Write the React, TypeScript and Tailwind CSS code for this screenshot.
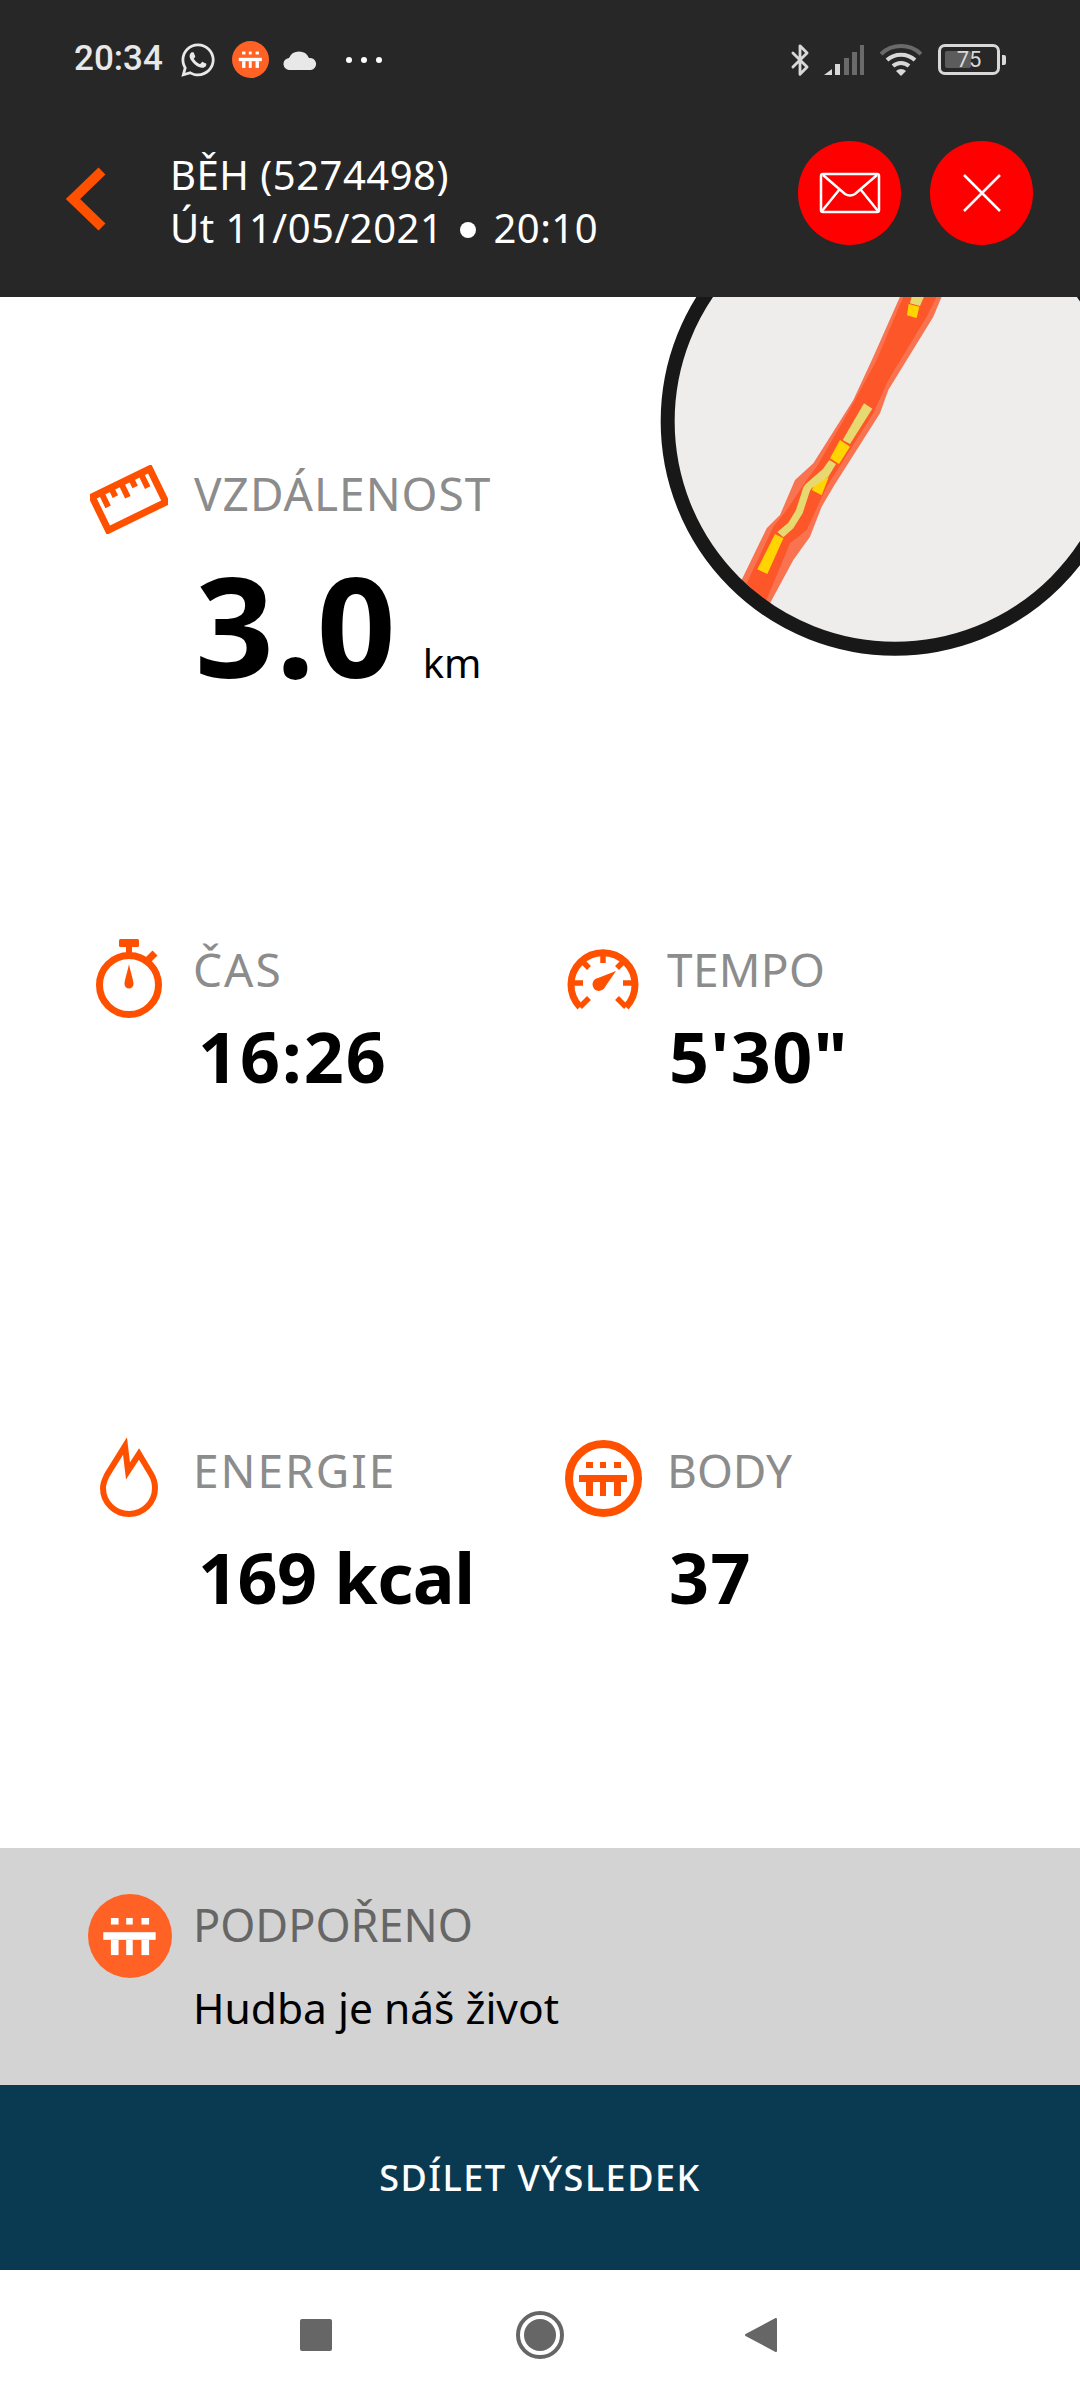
import { Bluetooth } from "lucide-react";
import { FaWhatsapp } from "react-icons/fa";
import type { ReactNode } from "react";

const ORANGE = "#ff5000";

function PointsMark({ color }: { color: string }) {
  return (
    <g fill={color}>
      <rect x="21" y="22" width="7" height="6" />
      <rect x="35" y="22" width="6" height="6" />
      <rect x="49" y="22" width="7" height="6" />
      <rect x="14" y="35" width="48" height="7" />
      <rect x="21" y="42" width="7" height="14" />
      <rect x="35" y="42" width="6" height="14" />
      <rect x="49" y="42" width="7" height="14" />
    </g>
  );
}

function PointsIcon() {
  return (
    <svg viewBox="0 0 77 77" className="h-[77px] w-[77px]">
      <circle cx="38.5" cy="38.5" r="34.5" fill="none" stroke={ORANGE} strokeWidth="8" />
      <PointsMark color={ORANGE} />
    </svg>
  );
}

function LogoBadge({ size, fill }: { size: string; fill: string }) {
  return (
    <svg viewBox="0 0 77 77" className={size}>
      <circle cx="38.5" cy="38.5" r="38.5" fill={fill} />
      <PointsMark color="#fff" />
    </svg>
  );
}

function RulerIcon() {
  return (
    <svg viewBox="0 0 78 69" className="h-[69px] w-[78px]">
      <g transform="rotate(-26 39 34.5)">
        <rect x="7" y="16" width="64" height="37" fill="none" stroke={ORANGE} strokeWidth="7" />
        <path d="M17 16v16M28 16v10M39 16v16M50 16v10M61 16v16" stroke={ORANGE} strokeWidth="6" fill="none" />
      </g>
    </svg>
  );
}

function StopwatchIcon() {
  return (
    <svg viewBox="0 0 66 79" className="h-[79px] w-[66px]">
      <circle cx="33" cy="46" r="29.5" fill="none" stroke={ORANGE} strokeWidth="7" />
      <rect x="23" y="0" width="20" height="8" rx="1.5" fill={ORANGE} />
      <rect x="30" y="7" width="6" height="8" fill={ORANGE} />
      <path d="M52 21l7-7" stroke={ORANGE} strokeWidth="7" fill="none" />
      <path d="M33 25c1.5 8 4.5 16 4.5 20a4.5 4.5 0 0 1-9 0c0-4 3-12 4.5-20z" fill={ORANGE} />
    </svg>
  );
}

function GaugeIcon() {
  return (
    <svg viewBox="0 0 72 63" className="h-[63px] w-[72px]">
      <path d="M13 60A32 32 0 1 1 59 60" fill="none" stroke={ORANGE} strokeWidth="7" />
      <g stroke={ORANGE} strokeWidth="5.5" fill="none">
        <path d="M36 4v12M14 13l8 8M58 13l-8 8M4 36h12M68 36h-12M13 60l9-9M59 60l-9-9" />
      </g>
      <path d="M49 24L31 31a6.5 6.5 0 1 0 7 9z" fill={ORANGE} />
    </svg>
  );
}

function FlameIcon() {
  return (
    <svg viewBox="0 0 58 81" className="h-[81px] w-[58px]">
      <path
        d="M25 8l3 25 11-17 12 20c3 5 4 9 4 14a26 26 0 0 1-52 0c0-5 2-9 4-13z"
        fill="none"
        stroke={ORANGE}
        strokeWidth="6"
      />
    </svg>
  );
}

function Stat({
  icon,
  label,
  value,
  labelClass,
  valueClass,
}: {
  icon: ReactNode;
  label: string;
  value: string;
  labelClass: string;
  valueClass: string;
}) {
  return (
    <div className="flex">
      <div className="flex h-[80px] w-[82px] shrink-0 items-center justify-center">{icon}</div>
      <div className="ml-[23px]">
        <div className={`${labelClass} h-[52px] text-[46px] leading-[52px] text-[#8c8c8c]`}>{label}</div>
        <div className={`${valueClass} text-[70px] leading-[76px] font-bold text-black`}>{value}</div>
      </div>
    </div>
  );
}

function StatusBar() {
  return (
    <div className="flex h-[117px] items-center pt-[2px] pr-[74px] pl-[74px]">
      <span className="font-['Roboto'] text-[35px] font-medium text-[#e8e8e8]">20:34</span>
      <FaWhatsapp className="ml-[16px] text-[38px] text-[#e8e8e8]" />
      <LogoBadge size="ml-[15px] h-[37px] w-[37px]" fill="#ff6224" />
      <svg viewBox="0 0 34 20" className="ml-[14px] h-[20px] w-[34px]">
        <path d="M7 20a6 6 0 0 1-1-12 11 11 0 0 1 20 0 6 6 0 0 1 2 12z" fill="#e8e8e8" />
      </svg>
      <div className="ml-[29px] flex gap-[9px]">
        <span className="h-[6px] w-[6px] rounded-full bg-white" />
        <span className="h-[6px] w-[6px] rounded-full bg-white" />
        <span className="h-[6px] w-[6px] rounded-full bg-white" />
      </div>
      <div className="ml-auto flex items-center">
        <Bluetooth size={34} strokeWidth={2} className="text-[#d8d8d8]" />
        <svg viewBox="0 0 40 30" className="ml-[7px] h-[30px] w-[40px]">
          <path d="M0 30l8-6v6z" fill="#d8d8d8" />
          <rect x="11" y="19" width="5" height="11" fill="#d8d8d8" />
          <rect x="20" y="13" width="5" height="17" fill="#6a6a6a" />
          <rect x="28" y="7" width="5" height="23" fill="#6a6a6a" />
          <rect x="36" y="0" width="4" height="30" fill="#6a6a6a" />
        </svg>
        <svg viewBox="0 0 42 32" className="ml-[16px] h-[32px] w-[42px]">
          <path d="M1 10a29 29 0 0 1 40 0" fill="none" stroke="#6a6a6a" strokeWidth="4" />
          <path d="M7 16a21 21 0 0 1 28 0" fill="none" stroke="#d8d8d8" strokeWidth="4" />
          <path d="M13 22a12 12 0 0 1 16 0" fill="none" stroke="#d8d8d8" strokeWidth="4" />
          <path d="M21 32l-5-5a7 7 0 0 1 10 0z" fill="#d8d8d8" />
        </svg>
        <div className="relative ml-[16px] h-[31px] w-[62px] rounded-[7px] border-[3px] border-[#d8d8d8]">
          <div className="absolute top-[4px] bottom-[4px] left-[4px] w-[26px] rounded-[2px] bg-[#5c5c5c]" />
          <span className="absolute inset-0 flex items-center justify-center font-['Roboto'] text-[22px] text-[#d8d8d8]">
            75
          </span>
        </div>
        <div className="ml-[2px] h-[10px] w-[4px] rounded-r-[2px] bg-[#d8d8d8]" />
      </div>
    </div>
  );
}

function TitleBar() {
  return (
    <div className="flex h-[180px] items-start">
      <svg viewBox="0 0 42 64" className="mt-[50px] ml-[65px] h-[64px] w-[42px]">
        <path d="M37 4L8 32l29 28" fill="none" stroke={ORANGE} strokeWidth="10" />
      </svg>
      <div className="mt-[31px] ml-[63px] text-[40px] leading-[53px] tracking-[0.5px] text-white">
        <div>BĚH (5274498)</div>
        <div className="flex items-center">
          <span>Út 11/05/2021</span>
          <span className="mx-[17px] mt-[4px] h-[16px] w-[16px] rounded-full bg-white" />
          <span>20:10</span>
        </div>
      </div>
      <div className="mt-[24px] mr-[47px] ml-auto flex gap-[29px]">
        <button className="flex h-[104px] w-[103px] items-center justify-center rounded-full bg-[#ff0000]">
          <svg viewBox="0 0 62 42" className="h-[42px] w-[62px]">
            <g fill="none" stroke="#fff" strokeWidth="2.5">
              <rect x="2" y="2" width="58" height="38" rx="2" />
              <path d="M4 3l22 19q5 3 10 0L58 3M3 39l17-21M59 39L42 18" />
            </g>
          </svg>
        </button>
        <button className="flex h-[104px] w-[103px] items-center justify-center rounded-full bg-[#ff0000]">
          <svg viewBox="0 0 38 38" className="h-[38px] w-[38px]">
            <path d="M1 1l36 36M37 1L1 37" stroke="#fff" strokeWidth="2.5" fill="none" />
          </svg>
        </button>
      </div>
    </div>
  );
}

function RouteMap() {
  // drawn on a 3x grid of the 440x400 corner it occupies
  return (
    <svg viewBox="0 0 1320 1200" className="absolute top-[-17px] left-[640px] h-[400px] w-[440px]">
      <defs>
        <clipPath id="map-disc">
          <circle cx="765" cy="424" r="682" />
        </clipPath>
      </defs>
      <circle cx="765" cy="424" r="682" fill="#efedeb" />
      <g clipPath="url(#map-disc)">
        <path
          d="M780 50L905 50L880 110L745 330L720 400L580 620L545 680L510 770L460 840L390 970L300 910L380 745L420 705L465 600L520 550L640 360L700 230Z"
          fill="#f97350"
        />
        <path
          d="M790 50L890 50L860 110L745 300L700 400L560 620L500 750L450 790L375 970L320 910L400 740L440 690L500 600L530 560L640 370L710 240Z"
          fill="#fc5629"
        />
        <g fill="#ffd400">
          <path d="M806 72L838 80L830 114L801 106z" />
          <path d="M600 480L630 500L597 552L570 535z" />
          <path d="M530 605L566 592L545 646L515 630z" />
          <path d="M405 762L430 775L382 882L352 868z" />
        </g>
        <g fill="#e8d870">
          <path d="M815 50L852 50L840 78L810 70z" />
          <path d="M672 370L697 386L630 492L608 480z" />
          <path d="M568 540L588 552L565 590L515 625L510 632L488 700L460 745L430 772L412 756L445 728L468 690L490 622L497 612L548 568z" />
        </g>
      </g>
      <circle cx="765" cy="424" r="682" fill="none" stroke="#181818" strokeWidth="42" />
    </svg>
  );
}

export default function App() {
  return (
    <div className="flex h-[2400px] w-[1080px] flex-col overflow-hidden bg-white font-['Noto_Sans',sans-serif]">
      <header className="relative z-10 h-[297px] shrink-0 bg-[#272727]">
        <StatusBar />
        <TitleBar />
      </header>

      <main className="relative flex-1 overflow-hidden">
        <RouteMap />
        <div className="pl-[88px]">
          <div className="flex pt-[162px]">
            <div className="flex h-[80px] w-[82px] shrink-0 items-center justify-center">
              <RulerIcon />
            </div>
            <div className="ml-[24px]">
              <div className="mt-[8px] h-[52px] text-[46px] leading-[52px] tracking-[1px] text-[#8c8c8c]">
                VZDÁLENOST
              </div>
              <div className="mt-[40px] flex items-baseline pl-[1px]">
                <span className="text-[138px] leading-[130px] font-bold tracking-[2px] text-black">3.0</span>
                <span className="ml-[25px] text-[40px] text-black">km</span>
              </div>
            </div>
          </div>

          <div className="mt-[245px] grid grid-cols-[474px_1fr]">
            <Stat
              icon={<StopwatchIcon />}
              label="ČAS"
              value="16:26"
              labelClass="mt-[5px] tracking-[2px]"
              valueClass="mt-[23px] pl-[5px] tracking-[2px]"
            />
            <Stat
              icon={<GaugeIcon />}
              label="TEMPO"
              value={"5'30\""}
              labelClass="mt-[5px] tracking-[0.3px]"
              valueClass="mt-[23px] pl-[2px] tracking-[1.5px]"
            />
          </div>

          <div className="mt-[344px] grid grid-cols-[474px_1fr]">
            <Stat
              icon={<FlameIcon />}
              label="ENERGIE"
              value="169 kcal"
              labelClass="mt-[6px] tracking-[2px]"
              valueClass="mt-[43px] pl-[5px] tracking-[-0.5px]"
            />
            <Stat
              icon={<PointsIcon />}
              label="BODY"
              value="37"
              labelClass="mt-[6px]"
              valueClass="mt-[43px] pl-[2px] tracking-[1.5px]"
            />
          </div>
        </div>
      </main>

      <section className="flex h-[237px] shrink-0 bg-[#d3d3d3] pt-[46px] pl-[88px]">
        <LogoBadge size="h-[84px] w-[84px]" fill="#ff6224" />
        <div className="ml-[21px]">
          <div className="mt-[5px] h-[52px] text-[45px] leading-[52px] text-[#666666]">PODPOŘENO</div>
          <div className="mt-[32px] text-[42.5px] leading-[50px] text-black">Hudba je náš život</div>
        </div>
      </section>

      <button className="flex h-[185px] shrink-0 items-center justify-center bg-[#0a3a52] text-[36px] font-medium tracking-[1.5px] text-white">
        SDÍLET VÝSLEDEK
      </button>

      <nav className="relative flex h-[130px] shrink-0 items-center bg-white">
        <div className="ml-[300px] h-[32px] w-[32px] rounded-[2px] bg-[#666666]" />
        <div className="ml-[184px] flex h-[48px] w-[48px] items-center justify-center rounded-full border-[4px] border-[#666666]">
          <div className="h-[32px] w-[32px] rounded-full bg-[#666666]" />
        </div>
        <svg viewBox="0 0 32 36" className="ml-[181px] h-[36px] w-[32px]">
          <path d="M31 2v32L1 18z" fill="#666666" stroke="#666666" strokeWidth="2" strokeLinejoin="round" />
        </svg>
      </nav>
    </div>
  );
}
